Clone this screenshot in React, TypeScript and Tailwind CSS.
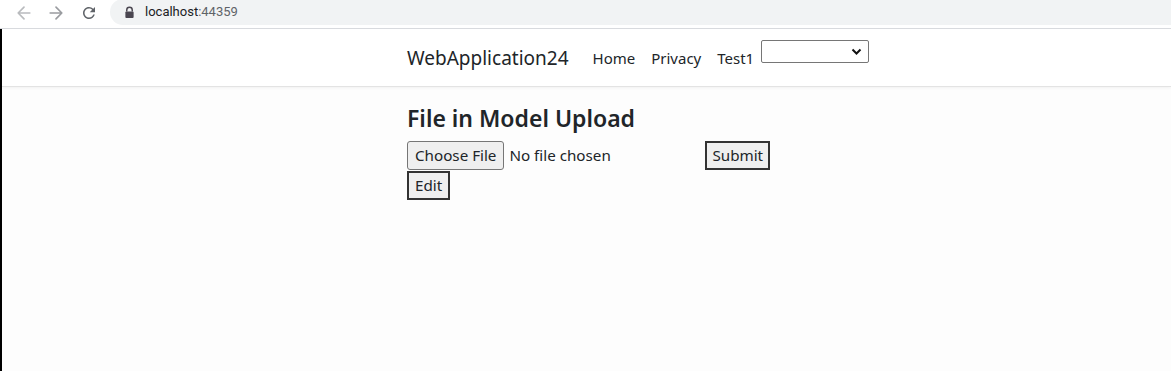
import React from "react";

export default function App() {
  const font = { fontFamily: '"Segoe UI", "Noto Sans", "Open Sans", sans-serif' };
  return (
    <div className="w-[1171px] h-[371px] overflow-hidden bg-white relative" style={font}>
      {/* Browser toolbar */}
      <div className="h-[26px] flex items-center bg-white">
        <div className="flex items-center pl-[14px] gap-[12px] w-[110px]">
          <svg width="20" height="20" viewBox="0 0 24 24" fill="none" stroke="#b9bbbe" strokeWidth="2" strokeLinecap="round" strokeLinejoin="round">
            <path d="M19 12H5M12 19l-7-7 7-7" />
          </svg>
          <svg width="20" height="20" viewBox="0 0 24 24" fill="none" stroke="#9a9ca0" strokeWidth="2" strokeLinecap="round" strokeLinejoin="round">
            <path d="M5 12h14M12 5l7 7-7 7" />
          </svg>
          <svg width="18" height="18" viewBox="0 0 24 24" fill="#5f6368" className="ml-[2px]">
            <path d="M17.65 6.35A7.958 7.958 0 0 0 12 4c-4.42 0-7.99 3.58-7.99 8s3.57 8 7.99 8c3.73 0 6.84-2.55 7.73-6h-2.08A5.99 5.99 0 0 1 12 18c-3.31 0-6-2.690-6-6s2.69-6 6-6c1.66 0 3.14.69 4.22 1.78L13 11h7V4l-2.35 2.35z" />
          </svg>
        </div>
        <div className="flex-1 h-[26px] -mt-[2px] bg-[#f1f3f4] rounded-l-[14px] flex items-center pl-[14px]">
          <svg width="11" height="13" viewBox="0 0 12 14" className="mr-[10px]">
            <path d="M3 6V4.2a3 3 0 0 1 6 0V6" fill="none" stroke="#4a4650" strokeWidth="1.6" />
            <rect x="1.5" y="6" width="9" height="7" rx="1" fill="#4a4650" />
          </svg>
          <span className="text-[13px] text-[#202124]" style={{ fontFamily: '"Roboto", "Noto Sans", sans-serif' }}>
            localhost<span className="text-[#5f6368]">:44359</span>
          </span>
        </div>
      </div>
      <div className="h-[3px] bg-white border-b border-[#dadce0]" />

      {/* Page */}
      <div className="flex h-[342px]">
        <div className="w-[2px] bg-black" />
        <div className="flex-1 bg-[#fdfdfd]">
          <nav className="h-[58px] bg-white border-b border-[#e3e3e3] shadow-[0_1px_3px_rgba(0,0,0,0.05)] flex items-center pl-[405px] pt-[2px]">
            <span className="text-[19px] text-[#212529] leading-none mr-[24px]">WebApplication24</span>
            <div className="flex items-center gap-[16px] text-[15px] text-[#212529] leading-none">
              <span>Home</span>
              <span>Privacy</span>
              <span>Test1</span>
            </div>
            <div className="self-start mt-[9px] ml-[7px] w-[108px] h-[23px] border border-[#767676] rounded-[2px] bg-white flex items-center justify-end pr-[6px]">
              <svg width="11" height="8" viewBox="0 0 11 8">
                <path d="M1.5 1.5l4 4 4-4" fill="none" stroke="#111" strokeWidth="2" />
              </svg>
            </div>
          </nav>
          <div className="pl-[405px] pt-[16px]">
            <h2 className="text-[23px] font-semibold text-[#212529] leading-[30px] mb-[8px]">File in Model Upload</h2>
            <div className="flex items-center h-[29px]">
              <div className="h-[29px] px-[7px] border border-[#767676] rounded-[3px] bg-[#efefef] text-[15.2px] text-[#212529] flex items-center">Choose File</div>
              <span className="text-[15.2px] text-[#212529] ml-[5px] w-[196px]">No file chosen</span>
              <div className="h-[29px] px-[5px] border-2 border-[#333] bg-[#efefef] text-[15.2px] text-[#212529] flex items-center">Submit</div>
            </div>
            <div className="mt-[1px] inline-flex h-[29px] px-[6px] border-2 border-[#333] bg-[#efefef] text-[15.2px] text-[#212529] items-center">Edit</div>
          </div>
        </div>
      </div>
    </div>
  );
}
